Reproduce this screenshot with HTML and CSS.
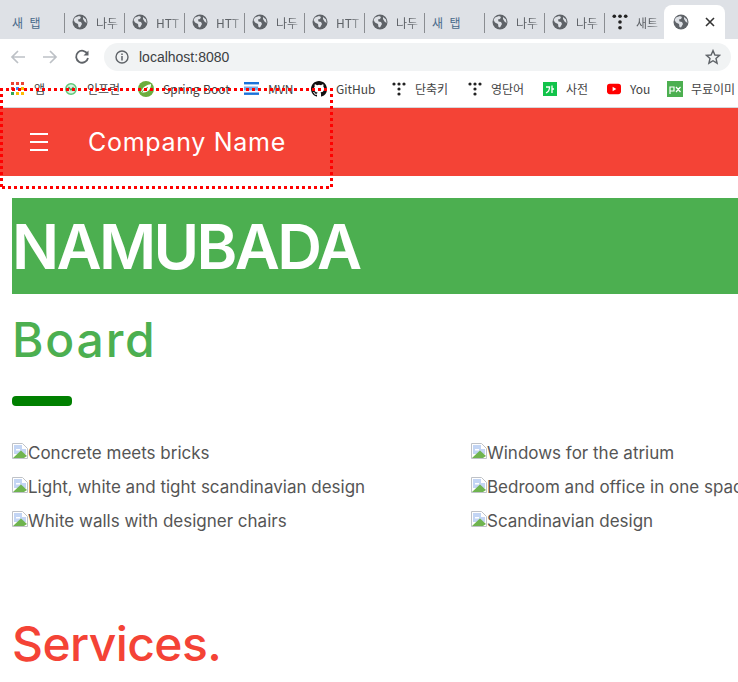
FILE: index.html
```html
<!DOCTYPE html>
<html lang="ko">
<head>
  <meta charset="UTF-8">
  <title>NAMUBADA</title>
  <link rel="stylesheet" href="styles.css">
</head>
<body>
  <svg class="defs" width="0" height="0">
    <symbol id="globe" viewBox="0 0 16 16">
      <circle cx="8" cy="8" r="7.5" fill="#5f6368"/>
      <path d="M3 3.5 L7 2 L9 3 L8 5 L6 5.5 L6.5 7.5 L9 8 L10 10 L8 13.5 L6.5 13 L6 10 L3 8.5 L1.5 6 Z M11 3 L14 5.5 L14.5 9 L12.5 7.5 L11 5 Z" fill="#dee1e6"/>
    </symbol>
    <symbol id="dots" viewBox="0 0 14 14">
      <g fill="#222">
        <circle cx="2" cy="2" r="1.6"/><circle cx="7" cy="2" r="1.6"/><circle cx="12" cy="2" r="1.6"/>
        <circle cx="7" cy="7" r="1.6"/><circle cx="7" cy="12" r="1.6"/>
      </g>
    </symbol>
    <symbol id="broken" viewBox="0 0 16 16">
      <path d="M0.5 15.5 V0.5 H10.5 L15.5 5.5 V15.5 Z" fill="#fff" stroke="#bfc2c7"/>
      <path d="M2 2 H10 V6 H14 V11 L2 11 Z" fill="#c3d5f4"/>
      <path d="M4 6 H8 V7.5 H4 Z" fill="#fff"/>
      <path d="M1 15 L9 7.5 L15 13 L12 15 Z" fill="#6fb44f"/>
    </symbol>
  </svg>

  <!-- Browser tabs -->
  <div class="tabstrip">
    <div class="tab plain"><span>새 탭</span></div>
    <div class="tab"><svg class="fav"><use href="#globe"/></svg><span>나두</span></div>
    <div class="tab"><svg class="fav"><use href="#globe"/></svg><span>HTT</span></div>
    <div class="tab"><svg class="fav"><use href="#globe"/></svg><span>HTT</span></div>
    <div class="tab"><svg class="fav"><use href="#globe"/></svg><span>나두</span></div>
    <div class="tab"><svg class="fav"><use href="#globe"/></svg><span>HTT</span></div>
    <div class="tab"><svg class="fav"><use href="#globe"/></svg><span>나두</span></div>
    <div class="tab plain"><span>새 탭</span></div>
    <div class="tab"><svg class="fav"><use href="#globe"/></svg><span>나두</span></div>
    <div class="tab"><svg class="fav"><use href="#globe"/></svg><span>나두</span></div>
    <div class="tab"><svg class="fav"><use href="#dots"/></svg><span>새트</span></div>
    <div class="tab active">
      <svg class="fav"><use href="#globe"/></svg>
      <svg class="close" viewBox="0 0 10 10"><path d="M1 1 L9 9 M9 1 L1 9" stroke="#333" stroke-width="1.6"/></svg>
    </div>
  </div>

  <!-- Address bar -->
  <div class="toolbar">
    <svg class="tool" viewBox="0 0 16 16"><path d="M15 8 H2 M8 2 L2 8 L8 14" fill="none" stroke="#bdc1c6" stroke-width="1.7"/></svg>
    <svg class="tool" viewBox="0 0 16 16"><path d="M1 8 H14 M8 2 L14 8 L8 14" fill="none" stroke="#bdc1c6" stroke-width="1.7"/></svg>
    <svg class="tool" viewBox="0 0 16 16"><path d="M13.5 5 A6 6 0 1 0 14 9" fill="none" stroke="#5f6368" stroke-width="1.8"/><path d="M14.5 1.5 V6.5 H9.5 Z" fill="#5f6368"/></svg>
    <div class="omnibox">
      <svg class="info" viewBox="0 0 14 14"><circle cx="7" cy="7" r="6" fill="none" stroke="#5f6368" stroke-width="1.4"/><path d="M7 6 V10.5 M7 3.4 V5" stroke="#5f6368" stroke-width="1.5"/></svg>
      <span class="url">localhost:8080</span>
      <svg class="star" viewBox="0 0 16 16"><path d="M8 1.6 L9.9 6 L14.6 6.4 L11 9.5 L12.1 14.2 L8 11.7 L3.9 14.2 L5 9.5 L1.4 6.4 L6.1 6 Z" fill="none" stroke="#5f6368" stroke-width="1.4"/></svg>
    </div>
  </div>

  <!-- Bookmarks -->
  <div class="bookmarks">
    <div class="bm bm-apps">
      <svg class="bm-icon" viewBox="0 0 14 14">
        <rect x="0" y="0" width="3" height="3" fill="#ea4335"/><rect x="5" y="0" width="3" height="3" fill="#ea4335"/><rect x="10" y="0" width="3" height="3" fill="#ea4335"/>
        <rect x="0" y="5" width="3" height="3" fill="#ea4335"/><rect x="5" y="5" width="3" height="3" fill="#4285f4"/><rect x="10" y="5" width="3" height="3" fill="#fbbc05"/>
        <rect x="0" y="10" width="3" height="3" fill="#34a853"/><rect x="5" y="10" width="3" height="3" fill="#fbbc05"/><rect x="10" y="10" width="3" height="3" fill="#fbbc05"/>
      </svg>
      <span>앱</span>
    </div>
    <div class="bm bm-inf">
      <svg class="bm-icon" viewBox="0 0 14 14"><circle cx="7" cy="7" r="5.2" fill="#d8f2df" stroke="#5cc777" stroke-width="1.5"/><path d="M4.5 5 L7 8 L9.5 5" fill="none" stroke="#3aa95a" stroke-width="1.2"/></svg>
      <span>인프런</span>
    </div>
    <div class="bm bm-spring">
      <svg class="bm-icon" viewBox="0 0 16 16"><circle cx="8" cy="8" r="8" fill="#6aad3d"/><path d="M3 11 C5 5 9 4 13 3 C13 8 10 12 5 11.5" fill="#fff"/><path d="M4 11 C6 8 8 7 10 6.5" fill="none" stroke="#6aad3d"/></svg>
      <span>Spring Boot</span>
    </div>
    <div class="bm bm-mvn">
      <svg class="bm-icon" viewBox="0 0 15 15"><rect x="0" y="1" width="15" height="2.4" fill="#1a73d9"/><rect x="0" y="11.5" width="15" height="2.4" fill="#1a73d9"/><path d="M1 5.5 V9.5 M3 5.5 V9.5 M5 5.5 V9.5 M7 5.5 V9.5 M9 5.5 V9.5 M11 5.5 V9.5 M13 5.5 V9.5" stroke="#1a73d9" stroke-width="1.2"/></svg>
      <span>MVN</span>
    </div>
    <div class="bm bm-git">
      <svg class="bm-icon" viewBox="0 0 16 16"><path fill="#111" d="M8 0C3.58 0 0 3.58 0 8c0 3.54 2.29 6.53 5.47 7.59.4.07.55-.17.55-.38v-1.49c-2.01.37-2.53-.49-2.69-.94-.09-.23-.48-.94-.82-1.13-.28-.15-.68-.52-.01-.53.63-.01 1.08.58 1.23.82.72 1.21 1.87.87 2.33.66.07-.52.28-.87.51-1.07-1.78-.2-3.64-.89-3.64-3.95 0-.87.31-1.59.82-2.15-.08-.2-.36-1.02.08-2.12 0 0 .67-.21 2.2.82a7.4 7.4 0 0 1 4 0c1.53-1.04 2.2-.82 2.2-.82.44 1.1.16 1.92.08 2.12.51.56.82 1.27.82 2.15 0 3.07-1.87 3.75-3.65 3.95.29.25.54.73.54 1.48v2.2c0 .21.15.46.55.38A8 8 0 0 0 16 8c0-4.42-3.58-8-8-8z"/></svg>
      <span>GitHub</span>
    </div>
    <div class="bm bm-short">
      <svg class="bm-icon" viewBox="0 0 14 14"><use href="#dots"/></svg>
      <span>단축키</span>
    </div>
    <div class="bm bm-word">
      <svg class="bm-icon" viewBox="0 0 14 14"><use href="#dots"/></svg>
      <span>영단어</span>
    </div>
    <div class="bm bm-dict">
      <svg class="bm-icon" viewBox="0 0 14 14"><rect width="14" height="14" fill="#12c34a"/><path d="M3 5 H6.5 C6.5 8 5.5 10 3 11 M9 3.5 V11 M9 7 H11" fill="none" stroke="#fff" stroke-width="1.3"/></svg>
      <span>사전</span>
    </div>
    <div class="bm bm-you">
      <svg class="bm-icon" viewBox="0 0 15 11"><rect width="15" height="11" rx="3" fill="#f00"/><path d="M6 3 L10 5.5 L6 8 Z" fill="#fff"/></svg>
      <span>You</span>
    </div>
    <div class="bm bm-px">
      <svg class="bm-icon" viewBox="0 0 16 16"><rect width="16" height="16" fill="#4caf50"/><path d="M3 13 V6 H7 V10 H3 M9 6 L13.5 11 M13.5 6 L9 11" fill="none" stroke="#fff" stroke-width="1.2"/></svg>
      <span>무료이미</span>
    </div>
  </div>

  <!-- Page content -->
  <div class="page">
    <div class="navbar">
      <div class="burger"><i></i><i></i><i></i></div>
      <div class="brand">Company Name</div>
    </div>

    <div class="main">
      <div class="jumbo">NAMUBADA</div>
      <h1 class="board-title">Board</h1>
      <div class="rule"></div>

      <div class="gallery">
        <div class="photo"><svg class="broken"><use href="#broken"/></svg>Concrete meets bricks</div>
        <div class="photo"><svg class="broken"><use href="#broken"/></svg>Windows for the atrium</div>
        <div class="photo"><svg class="broken"><use href="#broken"/></svg>Light, white and tight scandinavian design</div>
        <div class="photo"><svg class="broken"><use href="#broken"/></svg>Bedroom and office in one space</div>
        <div class="photo"><svg class="broken"><use href="#broken"/></svg>White walls with designer chairs</div>
        <div class="photo"><svg class="broken"><use href="#broken"/></svg>Scandinavian design</div>
      </div>

      <h1 class="services-title">Services.</h1>
    </div>
  </div>

  <!-- Red dotted highlight drawn over the screenshot -->
  <div class="highlight"></div>
</body>
</html>
```

FILE: styles.css
```css
html, body {
  margin: 0;
  padding: 0;
  height: 100%;
  overflow: hidden;
  background: #fff;
}

body {
  position: relative;
  font-family: "Noto Sans CJK KR", "Liberation Sans", sans-serif;
  width: 738px;
}

.defs {
  position: absolute;
}

/* Tabs */
.tabstrip {
  display: flex;
  height: 39px;
  padding: 5px 0 0 4px;
  box-sizing: border-box;
  background: #dee1e6;
}

.tab {
  display: flex;
  align-items: center;
  gap: 8px;
  flex: 0 0 60px;
  box-sizing: border-box;
  height: 34px;
  padding-left: 8px;
  position: relative;
  font-size: 12px;
  color: #5f6368;
  white-space: nowrap;
  overflow: hidden;
}

.tab + .tab::before {
  content: "";
  position: absolute;
  left: 0;
  top: 8px;
  width: 1px;
  height: 20px;
  background: #8a8d91;
}

.tab span {
  -webkit-mask-image: linear-gradient(90deg, #000 65%, rgba(0, 0, 0, 0.35));
  mask-image: linear-gradient(90deg, #000 65%, rgba(0, 0, 0, 0.35));
}

.tab.plain span {
  color: #4a6a8a;
  word-spacing: 3px;
  -webkit-mask-image: none;
  mask-image: none;
}

.tab.active {
  flex: 0 0 61px;
  padding-left: 9px;
  background: #fff;
  border-radius: 8px 8px 0 0;
}

.tab.active::before {
  display: none;
}

.fav {
  width: 16px;
  height: 16px;
  flex: none;
}

.close {
  width: 10px;
  height: 10px;
  margin-left: 8px;
}

/* Address bar */
.toolbar {
  display: flex;
  align-items: center;
  height: 36px;
  padding-left: 10px;
  background: #fff;
}

.tool {
  width: 16px;
  height: 16px;
  margin-right: 16px;
  flex: none;
}

.omnibox {
  display: flex;
  align-items: center;
  width: 627px;
  height: 28px;
  margin-left: -2px;
  padding: 0 10px 0 11px;
  box-sizing: border-box;
  border-radius: 14px;
  background: #f1f3f4;
}

.info {
  width: 14px;
  height: 14px;
  margin-right: 10px;
}

.url {
  flex: 1;
  font-family: "Liberation Sans", sans-serif;
  font-size: 14px;
  color: #3c4043;
}

.star {
  width: 16px;
  height: 16px;
}

/* Bookmarks */
.bookmarks {
  display: flex;
  align-items: center;
  height: 33px;
  box-sizing: border-box;
  padding-bottom: 5px;
  background: #fff;
  border-bottom: 1px solid #d6d8dc;
  font-size: 12px;
  color: #444;
  white-space: nowrap;
}

.bm {
  display: flex;
  align-items: center;
  gap: 9px;
  flex: none;
}

.bm-icon {
  flex: none;
  width: 14px;
  height: 14px;
}

.bm-apps { margin-left: 11px; width: 53px; }
.bm-inf { width: 74px; }
.bm-spring { width: 106px; }
.bm-spring .bm-icon { width: 16px; height: 16px; }
.bm-mvn { width: 67px; }
.bm-mvn .bm-icon { width: 15px; height: 15px; }
.bm-git { width: 81px; }
.bm-git .bm-icon { width: 16px; height: 16px; }
.bm-short { width: 76px; }
.bm-word { width: 75px; }
.bm-dict { width: 64px; }
.bm-you { width: 60px; }
.bm-px { gap: 8px; }
.bm-px .bm-icon { width: 16px; height: 16px; }

/* Page */
.page {
  font-family: Inter, "Liberation Sans", sans-serif;
}

.navbar {
  display: flex;
  align-items: center;
  height: 68px;
  background: #f44336;
  color: #fff;
}

.burger {
  display: flex;
  flex-direction: column;
  gap: 6px;
  margin-left: 30px;
  width: 18px;
}

.burger i {
  display: block;
  height: 2px;
  background: #fff;
}

.brand {
  margin-left: 40px;
  font-size: 25px;
  letter-spacing: 0.7px;
}

.main {
  padding: 22px 0 0 12px;
}

.jumbo {
  display: flex;
  align-items: center;
  height: 96px;
  background: #4caf50;
  color: #fff;
  font-size: 62px;
  font-weight: 600;
  letter-spacing: -2.6px;
}

.board-title,
.services-title {
  margin: 0;
  font-size: 48px;
  font-weight: 500;
  line-height: 72px;
}

.board-title {
  margin-top: 10px;
  color: #4caf50;
  letter-spacing: 1.8px;
}

.rule {
  width: 60px;
  height: 10px;
  margin-top: 20px;
  border-radius: 4px;
  background: #008000;
}

.gallery {
  display: grid;
  grid-template-columns: 459px 320px;
  grid-auto-rows: 34px;
  margin-top: 30px;
  font-size: 17px;
  color: #555;
  white-space: nowrap;
}

.photo {
  display: flex;
  align-items: center;
}

.broken {
  flex: none;
  width: 16px;
  height: 16px;
  margin-bottom: 4px;
}

.services-title {
  margin-top: 70px;
  color: #f44336;
  letter-spacing: -0.6px;
}

/* Overlay: square dots, 3px on and 3px off */
.highlight {
  position: absolute;
  left: 0;
  top: 88px;
  width: 333px;
  height: 101px;
  background:
    repeating-linear-gradient(90deg, #f00 0 3px, transparent 3px 6px) left top / 100% 3px no-repeat,
    repeating-linear-gradient(90deg, transparent 0 2px, #f00 2px 5px, transparent 5px 6px) left bottom / 330px 3px no-repeat,
    repeating-linear-gradient(180deg, #f00 0 3px, transparent 3px 6px) left top / 3px 100% no-repeat,
    repeating-linear-gradient(180deg, #f00 0 3px, transparent 3px 6px) right top / 3px 100% no-repeat;
}
```
